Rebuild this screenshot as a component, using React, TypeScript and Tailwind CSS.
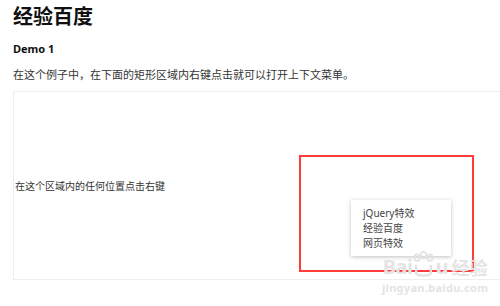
const cjk = { fontFamily: '"Noto Sans", "Noto Sans CJK SC", sans-serif' };

function ContextMenu() {
  const items = ["jQuery特效", "经验百度", "网页特效"];
  return (
    <div className="absolute left-[351px] top-[200px] flex h-[56px] w-[100px] flex-col justify-center bg-white pl-[12px] shadow-[0_1px_4px_rgba(0,0,0,0.25)]">
      {items.map((t) => (
        <div key={t} className="text-[10px] leading-[15px] text-[#444]">
          {t}
        </div>
      ))}
    </div>
  );
}

function Watermark() {
  return (
    <div className="absolute left-[382px] top-[251px] flex flex-col items-center text-[#e4e4e4]">
      <div className="flex items-end font-bold leading-none">
        <span className="text-[20px] tracking-[-0.5px]">Bai</span>
        <svg width="21" height="26" viewBox="0 0 20 24" className="mx-[1px]">
          <ellipse cx="4" cy="6" rx="2.5" ry="3.2" fill="none" stroke="#e2e2e2" strokeWidth="1.6" />
          <ellipse cx="10" cy="3.5" rx="2.5" ry="3" fill="none" stroke="#e2e2e2" strokeWidth="1.6" />
          <ellipse cx="16" cy="6" rx="2.5" ry="3.2" fill="none" stroke="#e2e2e2" strokeWidth="1.6" />
          <path d="M3 22 V13 M3 20 Q3 23 10 23 Q17 23 17 20 V13" fill="none" stroke="#e2e2e2" strokeWidth="2.2" />
        </svg>
        <span className="text-[20px]">u</span>
        <span className="ml-[3px] text-[18px]" style={cjk}>经验</span>
      </div>
      <div className="mt-[5px] text-[11px] font-bold leading-none tracking-[0.3px]">jingyan.baidu.com</div>
    </div>
  );
}

export default function App() {
  return (
    <main className="relative h-[306px] w-[500px] overflow-hidden bg-white text-[#222]" style={cjk}>
      <div className="px-[13px] pt-[3px]">
        <h1 className="text-[20px] font-bold leading-[28px] text-[#111]">经验百度</h1>
        <h2 className="mt-[11px] text-[11px] font-bold leading-[14px] text-[#111]">Demo 1</h2>
        <p className="mt-[12px] text-[11px] leading-[14px] text-[#333]">
          在这个例子中，在下面的矩形区域内右键点击就可以打开上下文菜单。
        </p>
        <div className="mt-[9px] flex h-[189px] w-[600px] items-center border-[1.5px] border-[#eeeeee] pl-[1px]">
          <span className="text-[10px] leading-[14px] text-[#333]">在这个区域内的任何位置点击右键</span>
        </div>
      </div>
      <div className="absolute left-[299px] top-[155px] h-[117px] w-[175px] border-2 border-[#ff3b3b]" />
      <ContextMenu />
      <Watermark />
    </main>
  );
}
